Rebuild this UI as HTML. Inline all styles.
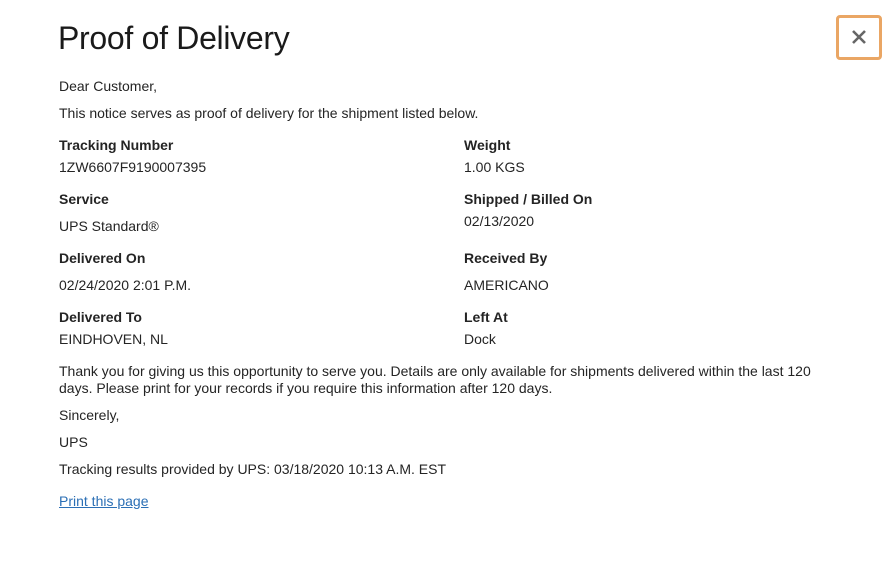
<!DOCTYPE html>
<html><head><style>
body{margin:0;width:892px;height:567px;background:#fff;font-family:"Liberation Sans",sans-serif;color:#242424;position:relative;overflow:hidden}
.t{position:absolute;left:59px;font-size:14px;line-height:16px;white-space:nowrap}
.r{left:464px}
.b{font-weight:bold}
h1{position:absolute;left:58px;top:18px;margin:0;font-size:32px;font-weight:normal;line-height:40px;color:#1a1a1a;letter-spacing:-0.3px}
.x{position:absolute;left:836px;top:15px;width:40px;height:39px;border:3px solid #eaa664;border-radius:4px}
a{color:#2b6fb5}
</style></head><body>
<h1>Proof of Delivery</h1>
<div class="x"><svg width="40" height="39" viewBox="0 0 40 39"><path d="M14 13L26 25M26 13L14 25" stroke="#666" stroke-width="2.6"/></svg></div>
<div class="t" style="top:78px">Dear Customer,</div>
<div class="t" style="top:105px">This notice serves as proof of delivery for the shipment listed below.</div>
<div class="t b" style="top:137px">Tracking Number</div>
<div class="t" style="top:159px">1ZW6607F9190007395</div>
<div class="t b r" style="top:137px">Weight</div>
<div class="t r" style="top:159px">1.00 KGS</div>
<div class="t b" style="top:191px">Service</div>
<div class="t" style="top:218px">UPS Standard®</div>
<div class="t b r" style="top:191px">Shipped / Billed On</div>
<div class="t r" style="top:213px">02/13/2020</div>
<div class="t b" style="top:250px">Delivered On</div>
<div class="t" style="top:277px">02/24/2020 2:01 P.M.</div>
<div class="t b r" style="top:250px">Received By</div>
<div class="t r" style="top:277px">AMERICANO</div>
<div class="t b" style="top:309px">Delivered To</div>
<div class="t" style="top:331px">EINDHOVEN, NL</div>
<div class="t b r" style="top:309px">Left At</div>
<div class="t r" style="top:331px">Dock</div>
<div class="t" style="top:363px">Thank you for giving us this opportunity to serve you. Details are only available for shipments delivered within the last 120</div>
<div class="t" style="top:380px">days. Please print for your records if you require this information after 120 days.</div>
<div class="t" style="top:407px">Sincerely,</div>
<div class="t" style="top:434px">UPS</div>
<div class="t" style="top:461px">Tracking results provided by UPS: 03/18/2020 10:13 A.M. EST</div>
<div class="t" style="top:493px"><a href="#">Print this page</a></div>
</body></html>
